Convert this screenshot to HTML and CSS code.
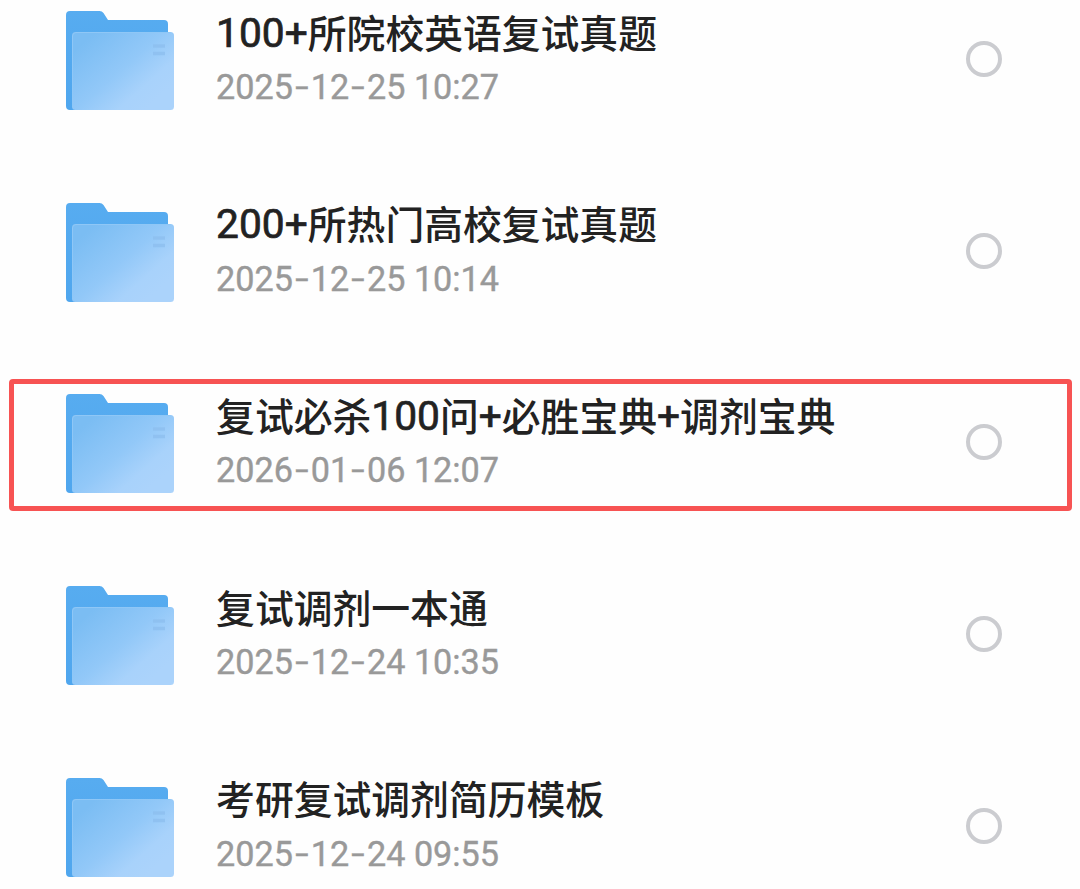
FILE: index.html
```
<!DOCTYPE html>
<html lang="zh-CN">
<head>
	<meta charset="utf-8">
	<meta name="viewport" content="width=device-width, initial-scale=1">
	<title>复试资料</title>
	<link rel="stylesheet" href="styles.css">
</head>

<body>
	<svg class="defs" width="0" height="0" aria-hidden="true">
		<defs>
			<linearGradient id="back" x1="0" y1="0" x2="0" y2="1">
				<stop offset="0" stop-color="#57acf0"/>
				<stop offset="1" stop-color="#4fa6ee"/>
			</linearGradient>
			<linearGradient id="front" gradientUnits="userSpaceOnUse" x1="22" y1="28" x2="82" y2="96">
				<stop offset="0" stop-color="#7bbdf3"/>
				<stop offset="0.5" stop-color="#92c8f8"/>
				<stop offset="0.8" stop-color="#a8d2fb"/>
				<stop offset="1" stop-color="#abd3fb"/>
			</linearGradient>
			<symbol id="folder" viewBox="0 0 108 99">
				<path fill="url(#back)" d="M4 0H33.500Q36 0 37.500 2L42 9H98Q102 9 102 13V60L40 99H4Q0 99 0 95V4Q0 0 4 0Z"/>
				<rect x="6" y="21" width="102" height="78" rx="3.500" fill="url(#front)"/>
				<path fill="none" stroke="#8fc7f6" d="M6.500 96V25Q6.500 21.500 10 21.500H104"/>
				<path stroke="#8cbeee" stroke-opacity="0.75" stroke-width="3.500" d="M87 35H99M87 42.500H99"/>
			</symbol>
		</defs>
	</svg>

	<ul class="files">
		<li class="file">
			<svg class="folder"><use href="#folder"/></svg>
			<div class="info">
				<h2 class="name"><span class="num">100+</span>所院校英语复试真题</h2>
				<p class="date">2025<i>-</i>12<i>-</i>25 10:27</p>
			</div>
			<span class="check"></span>
		</li>
		<li class="file">
			<svg class="folder"><use href="#folder"/></svg>
			<div class="info">
				<h2 class="name"><span class="num">200+</span>所热门高校复试真题</h2>
				<p class="date">2025<i>-</i>12<i>-</i>25 10:14</p>
			</div>
			<span class="check"></span>
		</li>
		<li class="file marked">
			<svg class="folder"><use href="#folder"/></svg>
			<div class="info">
				<h2 class="name">复试必杀<span class="num">100</span>问<span class="num">+</span>必胜宝典<span class="num">+</span>调剂宝典</h2>
				<p class="date">2026<i>-</i>01<i>-</i>06 12:07</p>
			</div>
			<span class="check"></span>
		</li>
		<li class="file">
			<svg class="folder"><use href="#folder"/></svg>
			<div class="info">
				<h2 class="name">复试调剂一本通</h2>
				<p class="date">2025<i>-</i>12<i>-</i>24 10:35</p>
			</div>
			<span class="check"></span>
		</li>
		<li class="file">
			<svg class="folder"><use href="#folder"/></svg>
			<div class="info">
				<h2 class="name">考研复试调剂简历模板</h2>
				<p class="date">2025<i>-</i>12<i>-</i>24 09:55</p>
			</div>
			<span class="check"></span>
		</li>
	</ul>
</body>

</html>
```
FILE: styles.css
```
*,
*::before,
*::after {
	box-sizing: border-box;
}

body {
	background-color: #fefefe;
	color: #222;
	font-family: "Noto Sans CJK SC", sans-serif;
	margin: 0;
}

.defs {
	position: absolute;
}

.files {
	display: grid;
	grid-template-rows: repeat(4, 191.7px) auto;
	list-style: none;
	margin: 0;
	padding: 0;
}

.file {
	align-items: start;
	display: grid;
	grid-template-columns: 108px 1fr 36px;
	column-gap: 43px;
	padding: 11px 78px 0 65.6px;
	position: relative;
}

.folder {
	display: block;
	height: 99px;
	width: 108px;
}

.name {
	font-size: 38.8px;
	font-weight: 500;
	line-height: 50px;
	height: 50px;
	margin: -5.500px 0 0 -0.500px;
	white-space: nowrap;
}

.num {
	-webkit-text-stroke: 0.7px #222;
	font-family: Roboto, sans-serif;
	font-size: 40.7px;
	font-weight: 400;
	line-height: 1;
	vertical-align: 1px;
}

.date {
	-webkit-text-stroke: 0.4px #999;
	color: #999;
	font-family: Roboto, sans-serif;
	font-size: 34.2px;
	line-height: 40px;
	margin: 11.500px 0 0 -0.500px;
	white-space: nowrap;
}

/* wide, slightly raised dash */
.date i {
	display: inline-block;
	font-style: normal;
	text-align: center;
	transform: translateY(-1.500px) scaleX(1.4);
	width: 17.800px;
}

.check {
	border: 4px solid #cbccd0;
	border-radius: 50%;
	height: 36px;
	margin-top: 30px;
	width: 36px;
}

.marked::after {
	border: 5px solid #f75353;
	border-radius: 4px;
	content: "";
	height: 132px;
	left: 9px;
	position: absolute;
	right: 8px;
	top: -4px;
}
```
